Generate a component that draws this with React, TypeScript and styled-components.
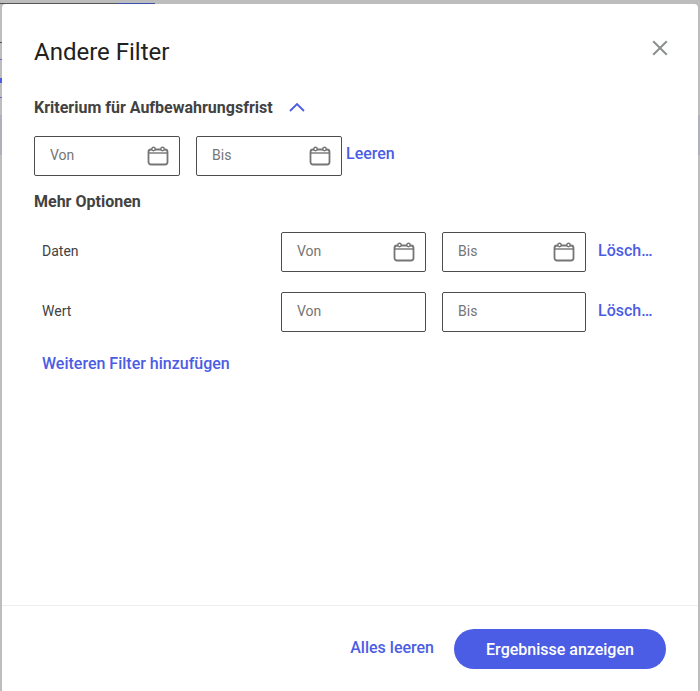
import { createGlobalStyle } from 'styled-components';
import styled from 'styled-components';

const GlobalStyle = createGlobalStyle`
  html, body {
    margin: 0;
    padding: 0;
    height: 100%;
    overflow: hidden;
    background: #bdbdbd;
    font-family: Roboto, "Liberation Sans", sans-serif;
  }
`;

const CalendarIcon = () => (
  <CalendarSvg viewBox="0 0 22 20" fill="none" stroke="#757575" strokeWidth="1.8">
    <rect x="1.5" y="3.5" width="19" height="15" rx="2.5" />
    <path d="M1.5 7h19" strokeWidth="1.4" />
    <circle cx="6.5" cy="3" r="1.7" fill="#fff" strokeWidth="1.4" />
    <circle cx="15.5" cy="3" r="1.7" fill="#fff" strokeWidth="1.4" />
  </CalendarSvg>
);

const DateField = ({ label, icon, width }: { label: string; icon?: boolean; width: number }) => (
  <Field $width={width}>
    <Placeholder>{label}</Placeholder>
    {icon && <CalendarIcon />}
  </Field>
);

const App = () => {
  return (
    <>
      <GlobalStyle />
      <Page>
        {/* Reste der Seite hinter dem Dialog */}
        <TopLine />
        <TopLineBlue />
        <SideMark $top={42} $color="#555" />
        <SideMark $top={59} $color="#5c6bd8" />
        <SideMark $top={78} $color="#4b5de4" $height={5} />
        <SideMark $top={97} $color="#5c6bd8" />
        <SideShade />
        <SideShadeRight />

        <Modal>
          <Body>
            <Header>
              <Title>Andere Filter</Title>
              <CloseIcon viewBox="0 0 16 16" stroke="#8a8f8f" strokeWidth="2">
                <path d="M1.2 1.2l13.6 13.6M14.8 1.2L1.2 14.8" />
              </CloseIcon>
            </Header>

            <SectionHead>
              <SectionTitle>Kriterium für Aufbewahrungsfrist</SectionTitle>
              <ChevronIcon viewBox="0 0 16 9" fill="none" stroke="#4b5de4" strokeWidth="1.8">
                <path d="M1 8l7-7 7 7" />
              </ChevronIcon>
            </SectionHead>

            <TopRow>
              <DateField label="Von" icon width={146} />
              <DateField label="Bis" icon width={146} />
              <ClearLink>Leeren</ClearLink>
            </TopRow>

            <MoreTitle>Mehr Optionen</MoreTitle>

            <FilterRow>
              <RowLabel>Daten</RowLabel>
              <DateField label="Von" icon width={145} />
              <DateField label="Bis" icon width={144} />
              <RowClear>Lösch…</RowClear>
            </FilterRow>
            <FilterRow>
              <RowLabel>Wert</RowLabel>
              <DateField label="Von" width={145} />
              <DateField label="Bis" width={144} />
              <RowClear>Lösch…</RowClear>
            </FilterRow>

            <AddLink>Weiteren Filter hinzufügen</AddLink>
          </Body>

          <Footer>
            <ClearAll>Alles leeren</ClearAll>
            <Submit>Ergebnisse anzeigen</Submit>
          </Footer>
        </Modal>
      </Page>
    </>
  );
};

export default App;

const Page = styled.div`
  position: relative;
  width: 700px;
  height: 691px;
  overflow: hidden;
  background: #bdbdbd;
  padding: 4px 2px 0;
  box-sizing: border-box;
`;

const TopLine = styled.div`
  position: absolute;
  top: 3px;
  left: 0;
  width: 116px;
  height: 1px;
  background: #555;
`;

const TopLineBlue = styled(TopLine)`
  left: 116px;
  width: 39px;
  background: #3f4ea8;
`;

const SideMark = styled.div<{ $top: number; $color: string; $height?: number }>`
  position: absolute;
  left: 0;
  top: ${(p) => p.$top}px;
  width: 2px;
  height: ${(p) => p.$height ?? 1}px;
  background: ${(p) => p.$color};
`;

const SideShade = styled.div`
  position: absolute;
  left: 0;
  top: 115px;
  width: 2px;
  height: 40px;
  background: #b0b0bc;
`;

const SideShadeRight = styled(SideShade)`
  left: auto;
  right: 0;
`;

const Modal = styled.div`
  position: relative;
  width: 696px;
  height: 687px;
  background: #fff;
  border-radius: 4px 4px 0 0;
  display: flex;
  flex-direction: column;
`;

const Body = styled.div`
  flex: 1;
  padding: 0 32px;
`;

const Header = styled.div`
  display: flex;
  align-items: center;
  justify-content: space-between;
  height: 88px;
  padding-top: 8px;
  box-sizing: border-box;
  margin-right: -2px;
`;

const Title = styled.h2`
  margin: 0;
  font-size: 24px;
  font-weight: 400;
  color: #212121;
`;

const CloseIcon = styled.svg`
  width: 16px;
  height: 16px;
  margin-top: -8px;
`;

const SectionHead = styled.div`
  display: flex;
  align-items: center;
  gap: 16px;
  height: 30px;
`;

const SectionTitle = styled.span`
  font-size: 16px;
  font-weight: 700;
  color: #424242;
`;

const ChevronIcon = styled.svg`
  width: 16px;
  height: 9px;
`;

const TopRow = styled.div`
  display: flex;
  align-items: center;
  gap: 16px;
  margin-top: 14px;
`;

const Field = styled.div<{ $width: number }>`
  box-sizing: border-box;
  width: ${(p) => p.$width}px;
  height: 40px;
  flex: none;
  display: flex;
  align-items: center;
  justify-content: space-between;
  padding: 0 10px 0 15px;
  border: 1px solid #4d4d4d;
  border-radius: 2px;
  background: #fff;
`;

const Placeholder = styled.span`
  margin-bottom: 2px;
  font-size: 14px;
  color: #757575;
`;

const CalendarSvg = styled.svg`
  width: 22px;
  height: 20px;
`;

const LinkText = styled.span`
  font-size: 16px;
  font-weight: 500;
  color: #4b5de4;
  white-space: nowrap;
`;

const ClearLink = styled(LinkText)`
  margin: -6px 0 0 -12px;
`;

const MoreTitle = styled.div`
  margin-top: 16px;
  height: 20px;
  line-height: 20px;
  font-size: 16px;
  font-weight: 700;
  color: #424242;
`;

const FilterRow = styled.div`
  display: flex;
  align-items: center;
  gap: 16px;
  margin-top: 20px;
  padding-left: 8px;
`;

const RowLabel = styled.span`
  width: 223px;
  flex: none;
  margin-bottom: 2px;
  font-size: 14px;
  color: #424242;
`;

const RowClear = styled(LinkText)`
  margin: -4px 0 0 -4px;
`;

const AddLink = styled(LinkText)`
  display: block;
  margin: 22px 0 0 8px;
  line-height: 20px;
`;

const Footer = styled.div`
  height: 86px;
  flex: none;
  box-sizing: border-box;
  border-top: 1px solid #eeeeee;
  display: flex;
  align-items: flex-start;
  justify-content: flex-end;
  gap: 20px;
  padding: 23px 32px 0 0;
`;

const ClearAll = styled(LinkText)`
  line-height: 38px;
`;

const Submit = styled.button`
  width: 212px;
  height: 40px;
  border: none;
  border-radius: 20px;
  background: #4b5de4;
  color: #fff;
  font-family: inherit;
  font-size: 16px;
  font-weight: 500;
`;
